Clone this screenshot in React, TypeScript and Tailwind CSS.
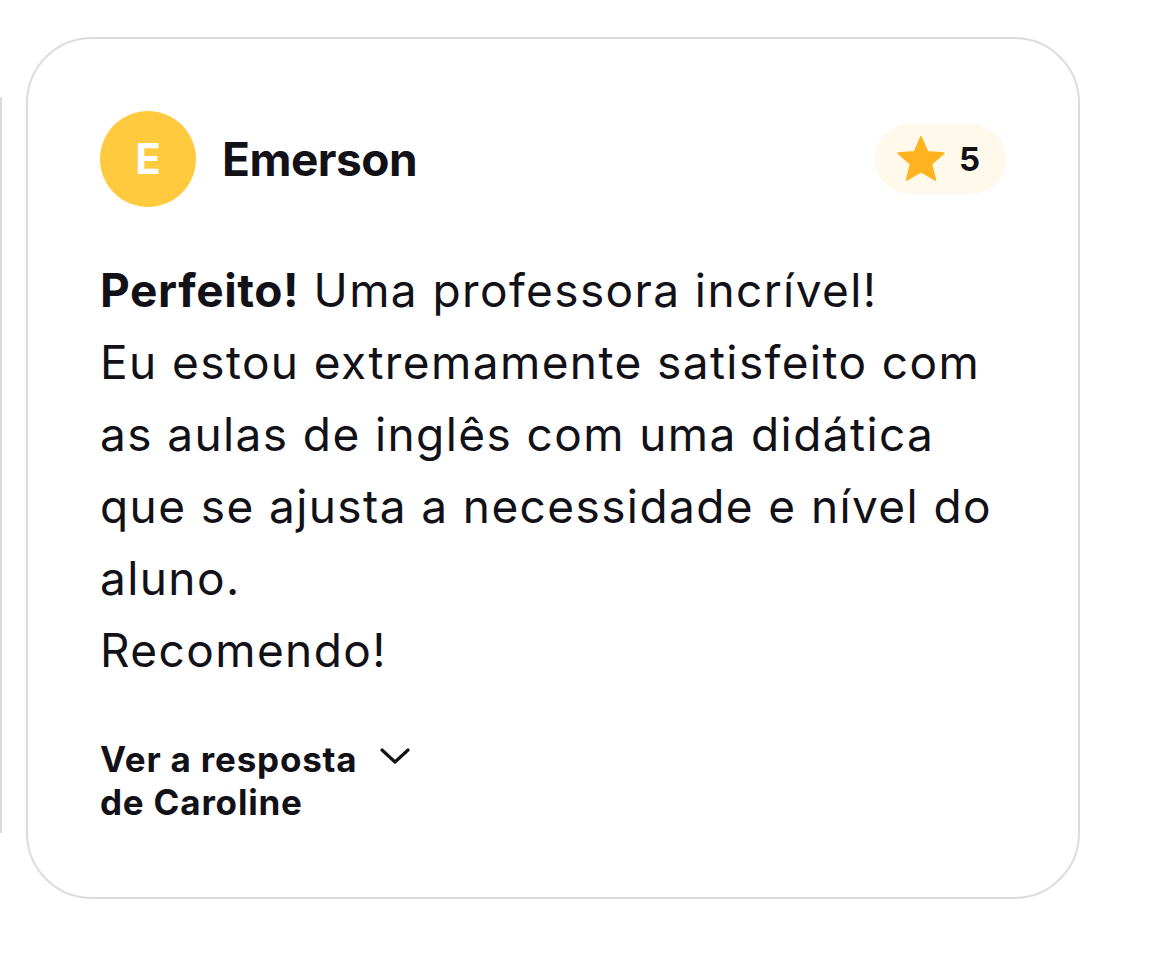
import React from "react";

const font = { fontFamily: "Inter, 'Noto Sans', sans-serif" };

function Star() {
  return (
    <svg width="50" height="48" viewBox="0 0 24 23" aria-hidden="true">
      <path
        d="M12 0.8 L15.1 8.1 L23 8.7 L17 13.9 L18.9 21.6 L12 17.5 L5.1 21.6 L7 13.9 L1 8.7 L8.9 8.1 Z"
        fill="#FFB31F"
        stroke="#FFB31F"
        strokeWidth="0.8"
        strokeLinejoin="round"
      />
    </svg>
  );
}

function Chevron() {
  return (
    <svg width="32" height="18" viewBox="0 0 32 18" aria-hidden="true">
      <path d="M3 3 L16 15 L29 3" fill="none" stroke="#121117" strokeWidth="3.2" strokeLinecap="round" strokeLinejoin="round" />
    </svg>
  );
}

export default function App() {
  const lines = [
    "Eu estou extremamente satisfeito com",
    "as aulas de inglês com uma didática",
    "que se ajusta a necessidade e nível do",
    "aluno.",
    "Recomendo!",
  ];
  return (
    <div className="w-[1153px] h-[957px] bg-white flex items-start pt-[37px] text-[#121117]" style={font}>
      <div className="w-[2px] h-[736px] mt-[60px] bg-[#dcdcdc] shrink-0" />
      <div className="ml-[24px] w-[1054px] h-[862px] shrink-0 border-2 border-[#dcdcdc] rounded-[66px] px-[72px] pt-[72px] flex flex-col">
        <div className="flex items-center justify-between">
          <div className="flex items-center">
            <div className="w-[96px] h-[96px] rounded-full bg-[#FFCA3E] flex items-center justify-center text-white font-bold text-[42px] leading-none">
              E
            </div>
            <div className="ml-[26px] text-[46px] font-bold leading-none tracking-[-0.5px]">Emerson</div>
          </div>
          <div className="h-[70px] rounded-full bg-[#FFF9EC] flex items-center pl-[21px] pr-[26px] gap-[13px]">
            <Star />
            <span className="text-[33px] font-bold leading-none">5</span>
          </div>
        </div>
        <div className="mt-[47px] text-[46px] leading-[72px] whitespace-nowrap tracking-[1.4px]">
          <div>
            <span className="font-bold tracking-[0.6px]">Perfeito!</span> Uma professora incrível!
          </div>
          {lines.map((l) => (
            <div key={l}>{l}</div>
          ))}
        </div>
        <div className="mt-[52px] flex items-start gap-[22px]">
          <div className="text-[35px] leading-[43px] font-bold tracking-[0.8px]">
            <div>Ver a resposta</div>
            <div>de Caroline</div>
          </div>
          <div className="mt-[9px]">
            <Chevron />
          </div>
        </div>
      </div>
    </div>
  );
}
